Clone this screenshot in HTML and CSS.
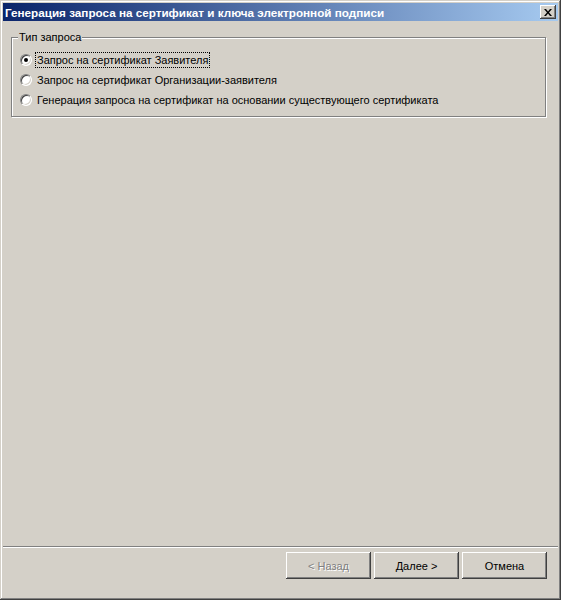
FILE: index.html
```html
<!DOCTYPE html>
<html lang="ru">
<head>
  <meta charset="UTF-8">
  <title>Генерация запроса на сертификат и ключа электронной подписи</title>
  <link rel="stylesheet" href="styles.css">
</head>
<body>

  <div class="window">
    <div class="title-bar">
      <span class="title-text">Генерация запроса на сертификат и ключа электронной подписи</span>
      <button class="close-btn" aria-label="Закрыть">
        <svg width="8" height="7" viewBox="0 0 8 7">
          <path d="M0 0h2l2 2.5L6 0h2L5 3.5 8 7H6L4 4.5 2 7H0l3-3.5z" fill="#000"/>
        </svg>
      </button>
    </div>

    <div class="page">
      <fieldset class="group">
        <legend>Тип запроса</legend>
        <div class="options">
          <label class="option">
            <span class="radio checked"></span>
            <span class="label focused">Запрос на сертификат Заявителя</span>
          </label>
          <label class="option">
            <span class="radio"></span>
            <span class="label">Запрос на сертификат Организации-заявителя</span>
          </label>
          <label class="option">
            <span class="radio"></span>
            <span class="label">Генерация запроса на сертификат на основании существующего сертификата</span>
          </label>
        </div>
      </fieldset>
    </div>

    <div class="separator"></div>

    <div class="buttons">
      <button class="btn" disabled>&lt; Назад</button>
      <button class="btn">Далее &gt;</button>
      <button class="btn">Отмена</button>
    </div>
  </div>

</body>
</html>
```

FILE: styles.css
```css
body {
  margin: 0;
  background: #d4d0c8;
  font-family: "Liberation Sans", "DejaVu Sans", sans-serif;
  font-size: 11px;
  color: #000;
}

.window {
  width: 561px;
  height: 600px;
  box-sizing: border-box;
  padding: 3px;
  display: flex;
  flex-direction: column;
  background: #d4d0c8;
  box-shadow: inset -1px -1px #404040, inset 1px 1px #d4d0c8,
              inset -2px -2px #808080, inset 2px 2px #fff;
}

/* заголовок окна */
.title-bar {
  height: 18px;
  display: flex;
  align-items: center;
  justify-content: space-between;
  padding: 0 2px;
  background: linear-gradient(to right, #0a246a, #a6caf0);
}

.title-text {
  color: #fff;
  font-weight: bold;
  font-size: 11.7px;
  white-space: nowrap;
}

.close-btn {
  width: 16px;
  height: 14px;
  padding: 0;
  border: none;
  background: #d4d0c8;
  display: flex;
  align-items: center;
  justify-content: center;
  box-shadow: inset -1px -1px #404040, inset 1px 1px #fff,
              inset -2px -2px #808080;
}

.page {
  flex: 1;
  padding: 10px 12px 0 8px;
}

/* группа "Тип запроса" */
.group {
  margin: 0;
  padding: 0 0 6px 8px;
  border: 1px solid #808080;
  box-shadow: inset 1px 1px #fff, 1px 1px #fff;
}

.group legend {
  padding: 0 1px;
  margin-left: -2px;
  line-height: 13px;
  background: #d4d0c8;
}

.options {
  margin-top: 6px;
}

.option {
  height: 20px;
  display: flex;
  align-items: center;
}

.radio {
  width: 12px;
  height: 12px;
  box-sizing: border-box;
  border-radius: 50%;
  background: #fff;
  border: 1px solid;
  border-color: #808080 #fff #fff #808080;
  box-shadow: inset 1px 1px #404040, inset -1px -1px #d4d0c8;
  display: flex;
  align-items: center;
  justify-content: center;
  flex-shrink: 0;
}

.radio.checked::after {
  content: "";
  width: 4px;
  height: 4px;
  border-radius: 50%;
  background: #000;
}

.label {
  margin-left: 3px;
  padding: 0 1px;
  line-height: 14px;
  white-space: nowrap;
  border: 1px dotted transparent;
}

.label.focused {
  border-color: #000;
}

.separator {
  height: 1px;
  background: #808080;
  border-bottom: 1px solid #fff;
}

.buttons {
  display: flex;
  justify-content: flex-end;
  gap: 3px;
  padding: 4px 11px 18px 0;
}

.btn {
  width: 85px;
  height: 27px;
  padding: 0;
  border: none;
  background: #d4d0c8;
  font-family: inherit;
  font-size: 11px;
  color: #000;
  box-shadow: inset -1px -1px #404040, inset 1px 1px #fff,
              inset -2px -2px #808080;
}

.btn:disabled {
  color: #808080;
  text-shadow: 1px 1px #fff;
}
```
